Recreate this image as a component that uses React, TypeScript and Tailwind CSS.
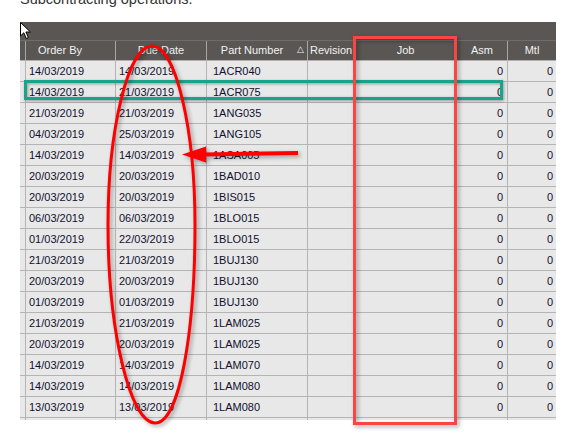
import React from 'react';

const ROWS: [string, string, string][] = [
  ['14/03/2019', '14/03/2019', '1ACR040'],
  ['14/03/2019', '21/03/2019', '1ACR075'],
  ['21/03/2019', '21/03/2019', '1ANG035'],
  ['04/03/2019', '25/03/2019', '1ANG105'],
  ['14/03/2019', '14/03/2019', '1ASA005'],
  ['20/03/2019', '20/03/2019', '1BAD010'],
  ['20/03/2019', '20/03/2019', '1BIS015'],
  ['06/03/2019', '06/03/2019', '1BLO015'],
  ['01/03/2019', '22/03/2019', '1BLO015'],
  ['21/03/2019', '21/03/2019', '1BUJ130'],
  ['20/03/2019', '20/03/2019', '1BUJ130'],
  ['01/03/2019', '01/03/2019', '1BUJ130'],
  ['21/03/2019', '21/03/2019', '1LAM025'],
  ['20/03/2019', '20/03/2019', '1LAM025'],
  ['14/03/2019', '14/03/2019', '1LAM070'],
  ['14/03/2019', '14/03/2019', '1LAM080'],
  ['13/03/2019', '13/03/2019', '1LAM080'],
];

const COLS = 'grid grid-cols-[6px_90px_91px_101px_47px_102px_51px_48px]';
const CELL = 'border-r border-[#b4b4b4] overflow-hidden whitespace-nowrap';
const HEAD = 'border-r border-[#a8a6a4] overflow-hidden whitespace-nowrap flex items-center justify-center';

function DataRow({ row }: { row: [string, string, string] }) {
  return (
    <div className={`${COLS} h-[21px] border-b border-[#b4b4b4] bg-[#e8e8e8] text-[11px] leading-[20px] text-[#10102e]`}>
      <div className={CELL} />
      <div className={`${CELL} pl-[3px]`}>{row[0]}</div>
      <div className={`${CELL} pl-[3px]`}>{row[1]}</div>
      <div className={`${CELL} pl-[6px]`}>{row[2]}</div>
      <div className={CELL} />
      <div className={CELL} />
      <div className={`${CELL} pr-[4px] text-right`}>0</div>
      <div className="pr-[3px] text-right">0</div>
    </div>
  );
}

export default function App() {
  return (
    <div className="relative w-[565px] h-[441px] overflow-hidden bg-white font-['Liberation_Sans',Arial,sans-serif]">
      {/* heading, cut off by the screenshot */}
      <div className="h-[22px] overflow-hidden">
        <p className="-mt-[9px] pl-[20px] text-[14.5px] leading-[16px] text-[#333]">Subcontracting operations.</p>
      </div>

      <div className="ml-[20px] w-[536px]">
        <div className="h-[18px] bg-[#595654]" />
        <div className={`${COLS} h-[21px] bg-[#595654] border-t border-[#6f6c69] border-b border-b-[#b0b0b0] text-[11px] text-[#f2f2f2]`}>
          <div className={HEAD} />
          <div className={`${HEAD} justify-start pl-[12px]`}>Order By</div>
          <div className={HEAD}>Due Date</div>
          <div className={`${HEAD} relative pr-[10px]`}>
            Part Number
            <span className="absolute right-[3px] top-[2px] text-[9px]">△</span>
          </div>
          <div className={`${HEAD} justify-start pl-[2px]`}>Revision</div>
          <div className={HEAD}>Job</div>
          <div className={HEAD}>Asm</div>
          <div className="flex items-center justify-center">Mtl</div>
        </div>
        {ROWS.map((r, i) => (
          <DataRow key={i} row={r} />
        ))}
        <div className={`${COLS} h-[2px] bg-[#e8e8e8]`}>
          <div className={CELL} />
          <div className={CELL} />
          <div className={CELL} />
          <div className={CELL} />
          <div className={CELL} />
          <div className={CELL} />
          <div className={CELL} />
          <div />
        </div>
      </div>

      {/* mouse pointer */}
      <svg className="absolute left-[20px] top-[22px]" width="13" height="18" viewBox="0 0 13 18">
        <path d="M0.5 0.5 L0.5 14 L3.8 10.8 L6.3 16.5 L8.4 15.6 L5.9 10 L10.5 10 Z" fill="#fff" stroke="#000" strokeWidth="1" strokeLinejoin="miter" />
      </svg>

      {/* annotations */}
      <div className="absolute left-[24px] top-[80px] w-[479px] h-[20px] border-[3px] border-[#17a48a] drop-shadow-[1px_1px_1.5px_rgba(0,0,0,0.35)]" />
      <div className="absolute left-[353px] top-[36px] w-[104px] h-[389px] border-[3px] border-[#fa4545] drop-shadow-[2px_2px_2px_rgba(0,0,0,0.35)]" />

      <svg className="absolute left-0 top-0 pointer-events-none drop-shadow-[2px_2px_2px_rgba(0,0,0,0.35)]" width="565" height="441" viewBox="0 0 565 441">
        <path
          d="M152 46 C176 46 195 130 195 225 C195 330 180 423 155 423 C130 423 108 330 108 225 C108 130 128 46 152 46 Z"
          fill="none"
          stroke="#ff0000"
          strokeWidth="3"
        />
        <path d="M298 151 L298 155 L204 156.5 L204 152.5 Z" fill="#ff0000" />
        <path d="M182 154.5 L206 146.5 L206 162.5 Z" fill="#ff0000" />
      </svg>
    </div>
  );
}
